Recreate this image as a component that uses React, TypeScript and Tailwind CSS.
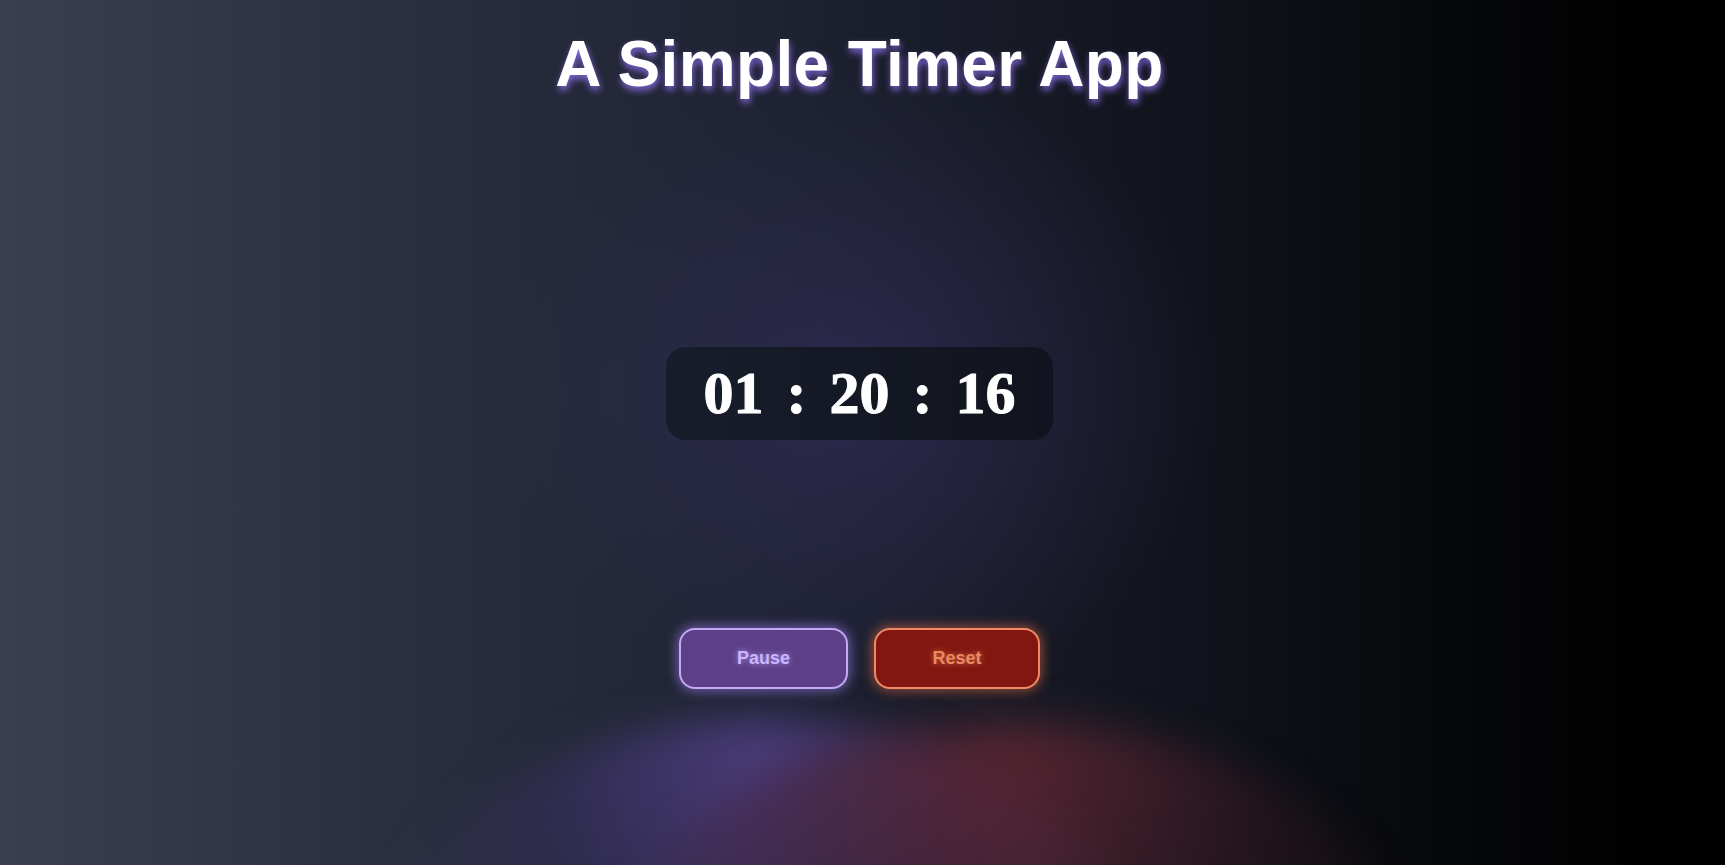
import { useState } from 'react'

const pad = (n: number) => String(n).padStart(2, '0')

const TimeBox = ({ h, m, s }: { h: number; m: number; s: number }) => {
  const parts = [pad(h), pad(m), pad(s)]
  return (
    <div className="flex items-center gap-[23px] rounded-[20px] bg-linear-to-r from-[#181d2b] to-[#11141e] px-[38px] py-4 font-['Liberation_Serif','Times_New_Roman',serif] text-[60px] leading-[61px] font-bold text-white [-webkit-text-stroke:1px_#fff]">
      {parts.map((p, i) => (
        <div key={i} className="flex items-center gap-[23px]">
          {i > 0 && <span>:</span>}
          <span>{p}</span>
        </div>
      ))}
    </div>
  )
}

const App = () => {
  const [running, setRunning] = useState(true)
  const [time, setTime] = useState({ h: 1, m: 20, s: 16 })

  return (
    <div className="relative flex h-[865px] w-full flex-col items-center overflow-hidden bg-[radial-gradient(ellipse_360px_320px_at_858px_390px,rgba(58,50,108,0.5),transparent),linear-gradient(to_right,#393f51,#2c3142_20%,#1e2231_45%,#10131b_70%,#050608_86%,#000_96%)] pr-[6px] font-['Liberation_Sans',Arial,sans-serif]">
      {/* glow reflections under the buttons */}
      <div className="pointer-events-none absolute top-[718px] left-[380px] h-[520px] w-[760px] rounded-[50%] bg-[radial-gradient(ellipse_at_50%_6%,rgba(80,64,132,0.9),rgba(56,46,96,0.5)_40%,transparent_75%)] blur-[20px]" />
      <div className="pointer-events-none absolute top-[722px] left-[610px] h-[520px] w-[800px] rounded-[50%] bg-[radial-gradient(ellipse_at_50%_6%,rgba(104,40,52,0.75),rgba(72,28,40,0.42)_40%,transparent_75%)] blur-[20px]" />

      <h1 className="relative mt-[28px] text-[64px] leading-[72px] font-bold tracking-[0.35px] text-white [text-shadow:1px_4px_7px_rgba(140,110,235,0.9)]">
        A Simple Timer App
      </h1>

      <div className="relative mt-[247px]">
        <TimeBox h={time.h} m={time.m} s={time.s} />
      </div>

      <div className="relative mt-[188px] flex gap-[26px]">
        <button
          type="button"
          onClick={() => setRunning(!running)}
          className="h-[61px] w-[169px] rounded-2xl border-2 border-[#c4a8f6] bg-[#5d3f88] text-[18px] font-bold text-[#c9b6ff] shadow-[0_0_12px_2px_rgba(160,130,245,0.6)] [text-shadow:0_0_6px_rgba(190,165,255,0.8)]"
        >
          {running ? 'Pause' : 'Start'}
        </button>
        <button
          type="button"
          onClick={() => setTime({ h: 0, m: 0, s: 0 })}
          className="h-[61px] w-[166px] rounded-2xl border-2 border-[#f08a64] bg-[#821711] text-[18px] font-bold text-[#e98a62] shadow-[0_0_12px_2px_rgba(240,110,70,0.55)] [text-shadow:0_0_6px_rgba(240,130,90,0.7)]"
        >
          Reset
        </button>
      </div>
    </div>
  )
}

export default App
